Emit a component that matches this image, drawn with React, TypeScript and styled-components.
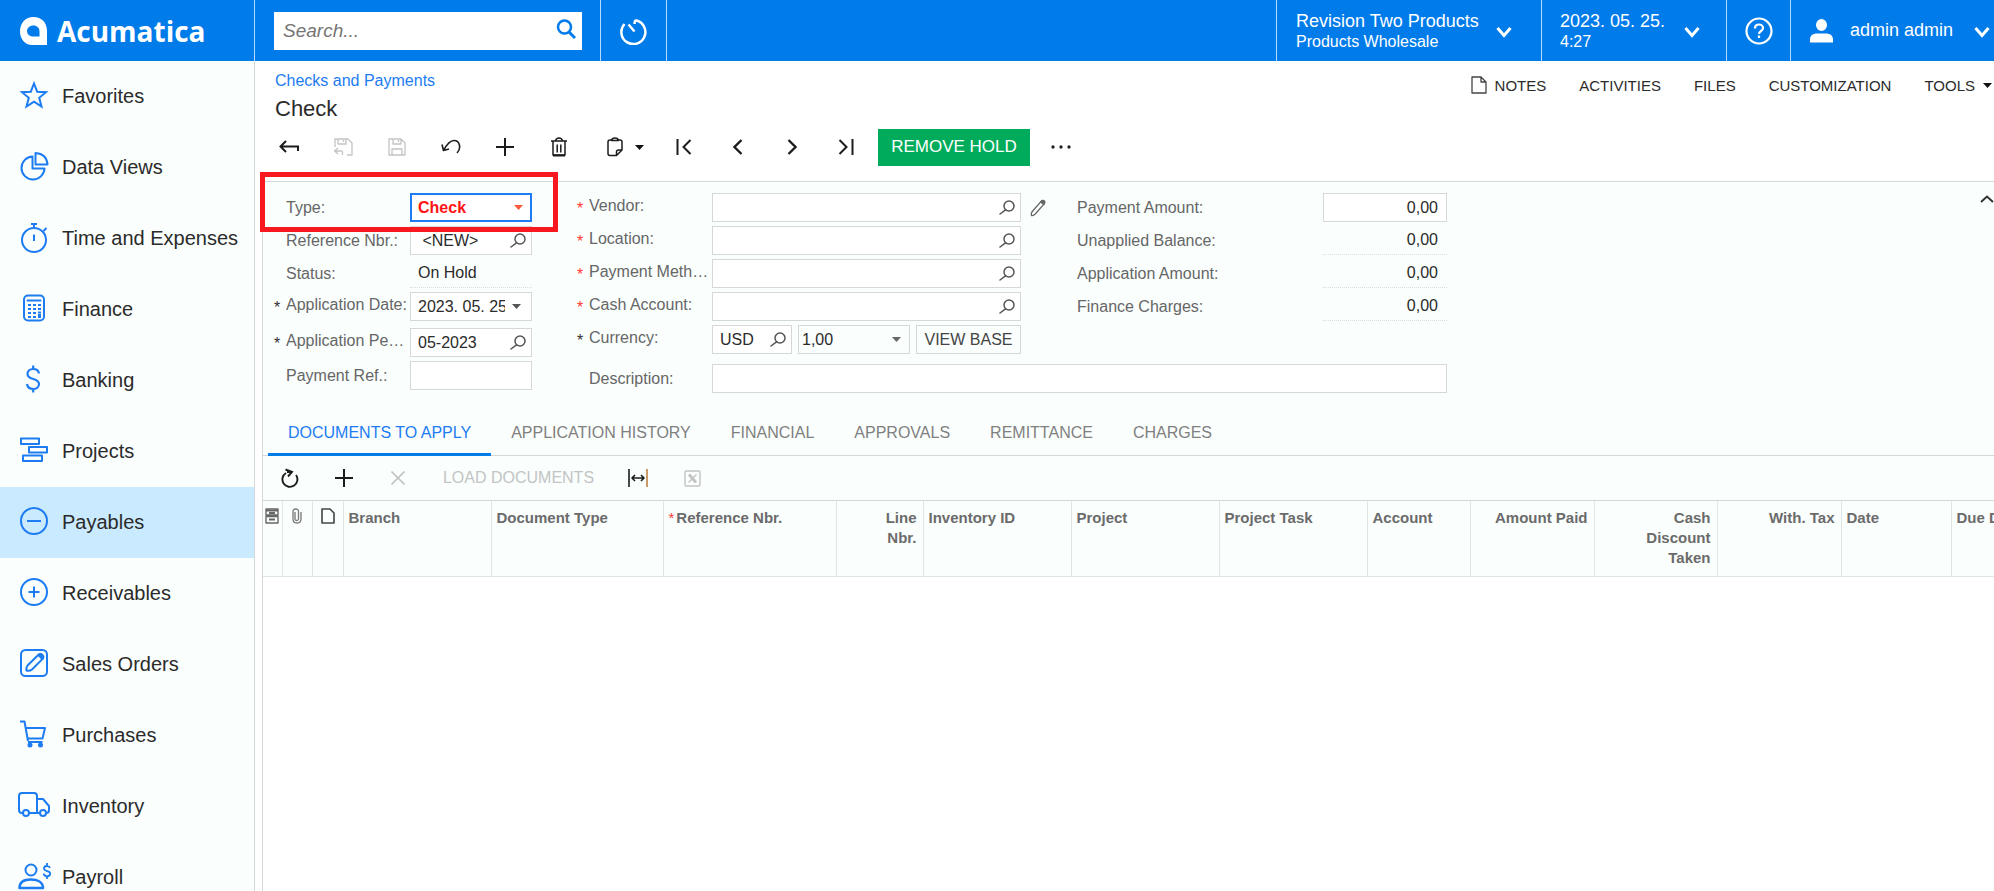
import React from "react";
import styled, { createGlobalStyle, css } from "styled-components";

const BLUE = "#007bea";
const LINK = "#1d7cf2";
const PANEL = "#fafefd";
const LINE = "#d4d8d8";
const TEXT = "#2b2b2b";
const LABEL = "#666666";

const GlobalStyle = createGlobalStyle`
  *, *::before, *::after { box-sizing: border-box; }
  body { margin: 0; background: #fff; }
  body, button, input, select {
    font-family: "Liberation Sans", Arial, sans-serif;
    font-size: 16px;
    color: ${TEXT};
  }
  button, input, select { margin: 0; padding: 0; border: 0; border-radius: 0; background: none; }
  button { cursor: pointer; }
  a { text-decoration: none; color: inherit; }
  svg { display: block; flex: none; }
`;

/* ---------- icons ---------- */

type IconProps = {
  w: number;
  h: number;
  sw?: number;
  color?: string;
  children: React.ReactNode;
};

const Icon = ({ w, h, sw = 2, color = "currentColor", children }: IconProps) => (
  <svg
    width={w}
    height={h}
    viewBox={`0 0 ${w} ${h}`}
    fill="none"
    stroke={color}
    strokeWidth={sw}
    strokeLinejoin="round"
    aria-hidden="true"
  >
    {children}
  </svg>
);

const Caret = ({ color = "#111" }: { color?: string }) => (
  <svg width="9" height="5" viewBox="0 0 9 5" aria-hidden="true">
    <path d="M0 0h9L4.5 5z" fill={color} />
  </svg>
);

const ChevronDown = () => (
  <Icon w={16} h={14} sw={3}>
    <path d="M1.500 4L8 11.500l6.500-7.500" strokeLinejoin="miter" />
  </Icon>
);

const Lens = () => (
  <Icon w={16} h={16} sw={1.5} color="#555">
    <circle cx="10" cy="6" r="5" />
    <path d="M6.500 9.800L1 14" strokeLinecap="round" />
  </Icon>
);

const Pencil = () => (
  <Icon w={16} h={18} sw={1.3} color="#666">
    <path d="M1.500 16.500q-.6-2.200.8-4L11.500 1.800q1.500-1 2.600 0t.3 2.800L5 15.300q-1.500 1.500-3.500 1.200z" />
    <path d="M10.500 3l3.300 2.500 1-2.500-2-1.700z" fill="#666" />
  </Icon>
);

const moduleIcons: Record<string, React.ReactNode> = {
  Favorites: (
    <path
      d="M14 2.500l3.200 8.200 8.800.5-6.800 5.600 2.300 8.700-7.500-4.900-7.500 4.900 2.300-8.700L2 11.200l8.800-.5z"
      strokeLinejoin="miter"
    />
  ),
  "Data Views": (
    <>
      <path d="M12.500 4.500a11.500 11.500 0 1 0 12 12H12.500z" />
      <path d="M15.500 1v11.500h12C27 5.500 22.500 1.500 15.500 1z" />
    </>
  ),
  "Time and Expenses": (
    <>
      <circle cx="14" cy="17" r="12" />
      <path d="M14 11.500V18M14 5V1M11 1h6M23.500 8l3-3" />
    </>
  ),
  Finance: (
    <>
      <rect x="4" y="1.500" width="20" height="25" rx="4" />
      <path d="M7.500 6.500h13" strokeLinecap="round" />
      <path d="M8 11h3M8 15h3M8 19h3M8 23h3M13 11h3M13 15h3M13 19h3M13 23h3M18 11h3M18 15h3M18 18.500h3M18 21h3M18 23h3" />
    </>
  ),
  Banking: (
    <path
      d="M19 8.500C18.500 5.500 16 4 13.200 4 10 4 7.500 6 7.500 9c0 6.500 11.500 3.500 11.500 10 0 3-2.500 5-5.800 5-3.200 0-5.700-1.800-6.200-5M13.200 4V.5M13.200 27.500V24"
      strokeWidth="2.200"
    />
  ),
  Projects: (
    <>
      <rect x="1" y="2.500" width="18" height="5.500" />
      <rect x="9" y="11" width="18" height="5.500" />
      <rect x="3" y="19.500" width="19" height="5.500" />
    </>
  ),
  Payables: (
    <>
      <circle cx="14" cy="14" r="13" />
      <path d="M7 14h14" />
    </>
  ),
  Receivables: (
    <>
      <circle cx="14" cy="14" r="13" />
      <path d="M8.500 14h11M14 8.500v11" />
    </>
  ),
  "Sales Orders": (
    <>
      <rect x="1" y="1" width="26" height="26" rx="4.500" />
      <path d="M6.500 21.500q-.5-3 1-5L18.500 5.800q2-1.200 3.700.4t.4 3.700L12 20.500q-2.500 2-5.500 1z" />
      <path d="M18.500 6l3.800 4q2.200-2 0-4t-3.800 0z" fill={LINK} />
    </>
  ),
  Purchases: (
    <>
      <path d="M0 1.500h4.500L8 21M5.800 8H25l-2.500 10.500H7.600M8 22h14.500" />
      <circle cx="10" cy="25" r="1.500" fill={LINK} />
      <circle cx="20.500" cy="25" r="1.500" fill={LINK} />
    </>
  ),
  Inventory: (
    <>
      <path d="M3 22H2q-3 0-3-3V5q0-3 3-3h12q3 0 3 3v17H9M17 8h6l6 7v4q0 3-2.500 3M20 22h-3" />
      <circle cx="6" cy="22" r="3" />
      <circle cx="23" cy="22" r="3" />
    </>
  ),
  Payroll: (
    <>
      <circle cx="11" cy="8" r="5.500" />
      <path d="M-.5 26c0-6 5-8.500 11.500-8.500S23 20 23 26z" strokeWidth="2.500" />
      <path
        d="M30 6c-.5-1.500-1.500-2-3-2-1.600 0-3 1-3 2.500 0 3.400 6.200 1.800 6.200 5.100 0 1.600-1.400 2.700-3.200 2.700-1.600 0-3-1-3.200-2.600M27 4V1M27 17v-2.700"
        strokeWidth="1.800"
      />
    </>
  ),
};

/* ---------- header ---------- */

const Page = styled.div`
  height: 100vh;
  display: flex;
  flex-direction: column;
  overflow: hidden;
`;

const Header = styled.header`
  display: flex;
  flex: none;
  height: 61px;
  background: ${BLUE};
  color: #fff;
`;

const Brand = styled.a`
  display: flex;
  align-items: center;
  gap: 10px;
  width: 254px;
  padding-left: 20px;
`;

const BrandName = styled.span`
  font: 700 28px/32px "Open Sans", "Noto Sans", sans-serif;
`;

const HeaderCell = styled.div<{ $w?: number; $left?: number; $right?: number; $grow?: boolean }>`
  display: flex;
  align-items: center;
  flex: ${(p) => (p.$grow ? "1 1 0" : "none")};
  width: ${(p) => (p.$w ? `${p.$w}px` : "auto")};
  padding: 0 ${(p) => p.$right ?? 0}px 0 ${(p) => p.$left ?? 0}px;
  border-left: 1px solid #b5dbff;
`;

const HeaderButton = styled.button<{ $center?: boolean }>`
  display: flex;
  align-items: center;
  justify-content: ${(p) => (p.$center ? "center" : "space-between")};
  width: 100%;
  height: 61px;
  color: #fff;
  text-align: left;
  font-size: 18px;
  white-space: nowrap;
`;

const SearchBox = styled.form`
  display: flex;
  align-items: center;
  width: 308px;
  height: 38px;
  padding: 0 7px 0 9px;
  background: #fff;
`;

const SearchInput = styled.input`
  flex: 1;
  min-width: 0;
  height: 38px;
  font-size: 19px;
  font-style: italic;
  outline: 0;
  &::placeholder { color: #757575; opacity: 1; }
`;

const TwoLines = styled.span`
  display: flex;
  flex-direction: column;
  line-height: 22px;
  small { font-size: 16px; line-height: 20px; }
`;

const UserName = styled.span`
  flex: 1;
  padding-left: 17px;
`;

/* ---------- sidebar ---------- */

const Body = styled.div`
  display: flex;
  flex: 1;
  min-height: 0;
`;

const Sidebar = styled.nav`
  flex: none;
  width: 255px;
  overflow: hidden;
  background: ${PANEL};
  border-right: 1px solid ${LINE};
`;

const Module = styled.a<{ $active?: boolean }>`
  display: flex;
  align-items: center;
  gap: 14px;
  height: 71px;
  padding-left: 20px;
  font-size: 20px;
  white-space: nowrap;
  background: ${(p) => (p.$active ? "#caeaff" : "transparent")};
  svg { overflow: visible; margin-bottom: 4px; }
`;

/* ---------- title and toolbar ---------- */

const Main = styled.main`
  flex: 1;
  min-width: 0;
  display: flex;
  flex-direction: column;
  padding-left: 7px;
`;

const TitleBar = styled.div`
  display: flex;
  justify-content: space-between;
  padding: 10px 2px 0 13px;
`;

const Crumb = styled.a`
  display: block;
  line-height: 20px;
  color: ${LINK};
`;

const Title = styled.h1`
  margin: 4px 0 0;
  font-size: 22px;
  line-height: 28px;
  font-weight: 400;
`;

const Links = styled.div`
  display: flex;
  gap: 33px;
  height: 28px;
`;

const LinkButton = styled.button`
  display: flex;
  align-items: center;
  gap: 8px;
  height: 28px;
  font-size: 15px;
`;

const Toolbar = styled.div<{ $grid?: boolean }>`
  display: flex;
  align-items: center;
  flex: none;
  ${(p) =>
    p.$grid
      ? css`
          height: 45px;
          border-bottom: 1px solid ${LINE};
        `
      : css`
          height: 58px;
          padding-bottom: 10px;
        `}
`;

const Tool = styled.button<{ $w?: number; $off?: boolean }>`
  display: flex;
  align-items: center;
  justify-content: center;
  flex: none;
  width: ${(p) => p.$w ?? 54}px;
  height: 37px;
  color: ${(p) => (p.$off ? "#c2c4c4" : "#1c1c1c")};
`;

const MenuTool = styled(Tool)`
  gap: 12px;
  padding-left: 7px;
`;

const HoldButton = styled.button`
  width: 152px;
  height: 37px;
  margin-left: 5px;
  background: #00ac5b;
  color: #fff;
  font-size: 17px;
`;

/* ---------- form ---------- */

const Panel = styled.section`
  position: relative;
  flex: 1;
  display: flex;
  flex-direction: column;
  border: solid ${LINE};
  border-width: 1px 0 0 1px;
`;

const Form = styled.div`
  display: flex;
  flex: none;
  gap: 45px;
  padding: 11px 0 12px 11px;
  background: ${PANEL};
`;

const Column = styled.div<{ $gap?: number }>`
  display: flex;
  flex-direction: column;
  gap: ${(p) => p.$gap ?? 4}px;
`;

const Columns = styled.div`
  display: flex;
`;

const Field = styled.div<{ $label: number; $control: number }>`
  display: grid;
  grid-template-columns: ${(p) => p.$label}px ${(p) => p.$control}px;
  align-items: center;
  height: 29px;
`;

const LabelCell = styled.label`
  display: flex;
  padding-right: 2px;
  color: ${LABEL};
  line-height: 20px;
`;

const Mark = styled.span<{ $red?: boolean }>`
  flex: none;
  width: 12px;
  padding-top: 3px;
  color: ${(p) => (p.$red ? "#ff3b30" : "#333")};
`;

const LabelText = styled.span`
  overflow: hidden;
  white-space: nowrap;
  text-overflow: ellipsis;
`;

const Box = styled.div<{ $focus?: boolean; $plain?: boolean }>`
  display: flex;
  align-items: center;
  height: 29px;
  min-width: 0;
  background: ${(p) => (p.$plain ? "transparent" : "#fff")};
  border: ${(p) => (p.$focus ? `2px solid ${LINK}` : `1px solid ${LINE}`)};
  padding: 0 ${(p) => (p.$focus ? 7 : 4)}px 0 ${(p) => (p.$focus ? 6 : p.$plain ? 3 : 7)}px;
`;

const Input = styled.input<{ $right?: boolean }>`
  flex: 1;
  min-width: 0;
  width: 100%;
  height: 25px;
  text-align: ${(p) => (p.$right ? "right" : "left")};
  padding-right: ${(p) => (p.$right ? 4 : 0)}px;
  outline: 0;
`;

const TypeSelect = styled.select`
  flex: 1;
  min-width: 0;
  height: 25px;
  appearance: none;
  font-weight: 700;
  color: #ff1414;
  outline: 0;
`;

const BoxButton = styled.button`
  display: flex;
  align-items: center;
  justify-content: center;
  flex: none;
  width: 18px;
  height: 25px;
`;

const DropButton = styled(BoxButton)`
  width: 22px;
`;

const ReadOnly = styled.output<{ $right?: boolean }>`
  height: 29px;
  line-height: 28px;
  padding: 0 9px 0 8px;
  text-align: ${(p) => (p.$right ? "right" : "left")};
  border-bottom: 1px dotted #dcdfdf;
`;

const CurrencyRow = styled.div`
  display: grid;
  grid-template-columns: 80px 112px 105px;
  gap: 6px;
`;

const ViewBase = styled.button`
  height: 29px;
  border: 1px solid ${LINE};
  color: #444;
`;

const EditButton = styled.button`
  display: flex;
  align-items: center;
  justify-content: center;
  width: 34px;
  height: 29px;
`;

const AmountColumn = styled(Column)`
  margin-left: 10px;
`;

const CollapseButton = styled.button`
  margin-left: auto;
  width: 14px;
  height: 12px;
  color: #333;
`;

const Highlight = styled.div`
  position: absolute;
  z-index: 1;
  left: -3px;
  top: -10px;
  width: 298px;
  height: 60px;
  border: 5px solid #f71820;
  pointer-events: none;
`;

/* ---------- tabs and grid ---------- */

const Tabs = styled.div`
  display: flex;
  flex: none;
  height: 51px;
  padding-left: 5px;
  background: ${PANEL};
  border-bottom: 1px solid ${LINE};
`;

const Tab = styled.button<{ $active?: boolean }>`
  height: 51px;
  padding: 7px 20px 0;
  color: ${(p) => (p.$active ? LINK : "#808080")};
  border-bottom: 3px solid ${(p) => (p.$active ? BLUE : "transparent")};
  white-space: nowrap;
`;

const GridArea = styled.div`
  flex: 1;
  overflow: hidden;
`;

const GridTop = styled.div`
  background: ${PANEL};
`;

const Table = styled.table`
  table-layout: fixed;
  width: 1797px;
  min-width: 100%;
  border-collapse: collapse;
  background: ${PANEL};
`;

const Th = styled.th<{ $right?: boolean; $icon?: boolean }>`
  height: 75px;
  padding: ${(p) => (p.$icon ? "7px 0 0" : "7px 6px 0 5px")};
  vertical-align: top;
  text-align: ${(p) => (p.$right ? "right" : "left")};
  font-size: 15px;
  line-height: 20px;
  font-weight: 700;
  color: #6b6b6b;
  white-space: nowrap;
  border: solid #dfe6e8;
  border-width: 0 1px 1px 0;
  svg { margin: 0 auto; }
  em { font-style: normal; font-weight: 400; color: #ff3b30; padding-right: 2px; }
`;

/* ---------- pieces ---------- */

const FieldLabel = ({ id, text, mark }: { id: string; text: string; mark?: "red" | "dark" }) => (
  <LabelCell htmlFor={id}>
    <Mark $red={mark === "red"}>{mark ? "*" : ""}</Mark>
    <LabelText>{text}</LabelText>
  </LabelCell>
);

const LookupField = ({
  id,
  text,
  mark,
  value = "",
  label = 135,
  control = 309,
}: {
  id: string;
  text: string;
  mark?: "red" | "dark";
  value?: string;
  label?: number;
  control?: number;
}) => (
  <Field $label={label} $control={control}>
    <FieldLabel id={id} text={text} mark={mark} />
    <Box>
      <Input id={id} defaultValue={value} />
      <BoxButton aria-label={`Look up ${text}`}>
        <Lens />
      </BoxButton>
    </Box>
  </Field>
);

const modules = Object.keys(moduleIcons);

const columns: { name: React.ReactNode; key: string; w: number; right?: boolean }[] = [
  { key: "branch", name: "Branch", w: 148 },
  { key: "doctype", name: "Document Type", w: 172 },
  { key: "ref", name: <><em>*</em>Reference Nbr.</>, w: 173 },
  { key: "line", name: <>Line<br />Nbr.</>, w: 87, right: true },
  { key: "inv", name: "Inventory ID", w: 148 },
  { key: "project", name: "Project", w: 148 },
  { key: "task", name: "Project Task", w: 148 },
  { key: "account", name: "Account", w: 103 },
  { key: "paid", name: "Amount Paid", w: 124, right: true },
  { key: "discount", name: <>Cash<br />Discount<br />Taken</>, w: 123, right: true },
  { key: "tax", name: "With. Tax", w: 124, right: true },
  { key: "date", name: "Date", w: 110 },
  { key: "due", name: "Due Date", w: 110 },
];

export default function App() {
  return (
    <Page>
      <GlobalStyle />
      <Header>
        <Brand href="#">
          <svg width="27" height="28" viewBox="0 0 27 28" aria-hidden="true">
            <path
              fill="#fff"
              fillRule="evenodd"
              d="M13.500 0C21.500 0 27 5.500 27 14v14H12.500C4.500 28 0 21.500 0 14.500 0 6 5.500 0 13.500 0zM13.500 8.500C9.500 8.500 7 11 7 14s2.500 5.500 6 5.500h6.500V14.500C19.500 11 17 8.500 13.500 8.500z"
            />
          </svg>
          <BrandName>Acumatica</BrandName>
        </Brand>
        <HeaderCell $w={346} $left={19}>
          <SearchBox onSubmit={(e) => e.preventDefault()}>
            <SearchInput type="search" aria-label="Search" placeholder="Search..." />
            <BoxButton aria-label="Search">
              <Icon w={20} h={24} sw={2.5} color={BLUE}>
                <circle cx="8.500" cy="8" r="6.500" />
                <path d="M12.500 12.500l6.500 6.500" strokeWidth="3" />
              </Icon>
            </BoxButton>
          </SearchBox>
        </HeaderCell>
        <HeaderCell $w={66}>
          <HeaderButton $center aria-label="Recent">
            <Icon w={28} h={28} sw={2.5}>
              <path d="M4.500 7A12 12 0 1 0 16.500 3.500Q14.500 3 14.500 7" />
              <path d="M8.500 7.500l6 7" />
            </Icon>
          </HeaderButton>
        </HeaderCell>
        <HeaderCell $grow />
        <HeaderCell $w={265} $left={19} $right={29}>
          <HeaderButton>
            <TwoLines>
              Revision Two Products
              <small>Products Wholesale</small>
            </TwoLines>
            <ChevronDown />
          </HeaderButton>
        </HeaderCell>
        <HeaderCell $w={185} $left={18} $right={26}>
          <HeaderButton>
            <TwoLines>
              2023. 05. 25.
              <small>4:27</small>
            </TwoLines>
            <ChevronDown />
          </HeaderButton>
        </HeaderCell>
        <HeaderCell $w={64}>
          <HeaderButton $center aria-label="Help">
            <Icon w={28} h={28} sw={2.2}>
              <circle cx="14" cy="14" r="12.500" />
              <path d="M10 11.500c0-2.500 1.700-4 4-4s4 1.500 4 3.500c0 3-4 3-4 6" />
              <path d="M14 18.500V21" />
            </Icon>
          </HeaderButton>
        </HeaderCell>
        <HeaderCell $w={204} $right={4}>
          <HeaderButton>
            <svg width="42" height="24" viewBox="-19 0 42 24" aria-hidden="true">
              <path
                fill="#fff"
                d="M11.500 0a5.500 6 0 0 1 0 12 5.500 6 0 0 1 0-12zM0 23.500v-3c0-4 3-6 7-6h9c4 0 7 2 7 6v3z"
              />
            </svg>
            <UserName>admin admin</UserName>
            <ChevronDown />
          </HeaderButton>
        </HeaderCell>
      </Header>

      <Body>
        <Sidebar>
          {modules.map((name) => (
            <Module key={name} href="#" $active={name === "Payables"}>
              <Icon w={28} h={28} color={LINK}>
                {moduleIcons[name]}
              </Icon>
              <span>{name}</span>
            </Module>
          ))}
        </Sidebar>

        <Main>
          <TitleBar>
            <div>
              <Crumb href="#">Checks and Payments</Crumb>
              <Title>Check</Title>
            </div>
            <Links>
              <LinkButton>
                <Icon w={16} h={18} sw={1.3} color="#444">
                  <path d="M1 1h9l5 5v11H1zM10 1v5h5" />
                </Icon>
                NOTES
              </LinkButton>
              <LinkButton>ACTIVITIES</LinkButton>
              <LinkButton>FILES</LinkButton>
              <LinkButton>CUSTOMIZATION</LinkButton>
              <LinkButton>
                <span>TOOLS</span>
                <Caret />
              </LinkButton>
            </Links>
          </TitleBar>

          <Toolbar>
            <Tool aria-label="Back">
              <Icon w={20} h={14}>
                <path d="M7 1L1.500 6.500 7 12M1.500 6.500H19V11" strokeLinejoin="miter" />
              </Icon>
            </Tool>
            <Tool $off aria-label="Save and close">
              <Icon w={20} h={18} sw={1.3}>
                <path d="M2 9V1h13l4 4v12h-5M5 1v5h8V1M10.500 2v2M5 10l-3.500 3L5 16M1.500 13H8q1.500 0 1.500 1.500V17" />
              </Icon>
            </Tool>
            <Tool $off aria-label="Save">
              <Icon w={18} h={18} sw={1.3}>
                <path d="M1 1h12l4 4v12H1zM5 1v5h8V1M10.500 2v2M4 17v-6h10v6" />
              </Icon>
            </Tool>
            <Tool aria-label="Undo">
              <Icon w={20} h={16} sw={1.6}>
                <path d="M1 5.500l1.500 6L8 10M2.500 11.500C6 5 9 1.500 13 1.500c6 0 7.500 8 3 12.500" />
              </Icon>
            </Tool>
            <Tool aria-label="Add">
              <Icon w={18} h={18}>
                <path d="M0 9h18M9 0v18" />
              </Icon>
            </Tool>
            <Tool aria-label="Delete">
              <Icon w={16} h={20} sw={1.5}>
                <path d="M0 4h16M4.500 4Q5 1 8 1t3.500 3M2 4v14h12V4M6.200 7.500v8M9.800 7.500v8" />
                <path d="M2 18.500h12" strokeWidth="2" />
              </Icon>
            </Tool>
            <MenuTool $w={71} aria-label="Clipboard">
              <Icon w={16} h={20} sw={1.5}>
                <path d="M4.500 3H3Q1 3 1 5v11.500q0 2 2 2h6.500L15 13V5q0-2-2-2h-1.500M4.500 3.500Q5 1 8 1t3.500 2.500zM9.500 18.500V15q0-2 2-2H15" />
              </Icon>
              <Caret />
            </MenuTool>
            <Tool aria-label="First">
              <Icon w={16} h={16}>
                <path d="M1.500 0v16M14.500 1L7.500 8l7 7" strokeLinejoin="miter" />
              </Icon>
            </Tool>
            <Tool aria-label="Previous">
              <Icon w={10} h={16} sw={2.3}>
                <path d="M8.500 1L1.500 8l7 7" strokeLinejoin="miter" />
              </Icon>
            </Tool>
            <Tool aria-label="Next">
              <Icon w={10} h={16} sw={2.3}>
                <path d="M1.500 1l7 7-7 7" strokeLinejoin="miter" />
              </Icon>
            </Tool>
            <Tool aria-label="Last">
              <Icon w={16} h={16}>
                <path d="M14.500 0v16M1.500 1l7 7-7 7" strokeLinejoin="miter" />
              </Icon>
            </Tool>
            <HoldButton>REMOVE HOLD</HoldButton>
            <Tool $w={62} aria-label="More">
              <svg width="20" height="4" viewBox="0 0 20 4" fill="#222" aria-hidden="true">
                <circle cx="2" cy="2" r="1.700" />
                <circle cx="10" cy="2" r="1.700" />
                <circle cx="18" cy="2" r="1.700" />
              </svg>
            </Tool>
          </Toolbar>

          <Panel>
            <Highlight />
            <Form>
              <Column $gap={7}>
                <Column>
                  <Field $label={136} $control={122}>
                    <FieldLabel id="type" text="Type:" />
                    <Box $focus>
                      <TypeSelect id="type" defaultValue="Check">
                        <option>Check</option>
                      </TypeSelect>
                      <Caret color="#ff5a3c" />
                    </Box>
                  </Field>
                  <LookupField id="ref" text="Reference Nbr.:" value=" <NEW>" label={136} control={122} />
                  <Field $label={136} $control={122}>
                    <FieldLabel id="status" text="Status:" />
                    <ReadOnly id="status">On Hold</ReadOnly>
                  </Field>
                  <Field $label={136} $control={122}>
                    <FieldLabel id="date" text="Application Date:" mark="dark" />
                    <Box>
                      <Input id="date" defaultValue="2023. 05. 25." />
                      <DropButton aria-label="Choose date">
                        <Caret color="#555" />
                      </DropButton>
                    </Box>
                  </Field>
                </Column>
                <Column>
                  <LookupField
                    id="period"
                    text="Application Period:"
                    mark="dark"
                    value="05-2023"
                    label={136}
                    control={122}
                  />
                  <Field $label={136} $control={122}>
                    <FieldLabel id="payref" text="Payment Ref.:" />
                    <Box>
                      <Input id="payref" />
                    </Box>
                  </Field>
                </Column>
              </Column>

              <Column $gap={10}>
                <Columns>
                  <Column>
                    <LookupField id="vendor" text="Vendor:" mark="red" />
                    <LookupField id="location" text="Location:" mark="red" />
                    <LookupField id="method" text="Payment Method:" mark="red" />
                    <LookupField id="cash" text="Cash Account:" mark="red" />
                    <Field $label={135} $control={309}>
                      <FieldLabel id="currency" text="Currency:" mark="dark" />
                      <CurrencyRow>
                        <Box>
                          <Input id="currency" defaultValue="USD" />
                          <BoxButton aria-label="Look up currency">
                            <Lens />
                          </BoxButton>
                        </Box>
                        <Box $plain>
                          <Input aria-label="Currency rate" defaultValue="1,00" />
                          <BoxButton aria-label="Rate options">
                            <Caret color="#666" />
                          </BoxButton>
                        </Box>
                        <ViewBase>VIEW BASE</ViewBase>
                      </CurrencyRow>
                    </Field>
                  </Column>
                  <EditButton aria-label="Edit vendor">
                    <Pencil />
                  </EditButton>
                  <AmountColumn>
                    <Field $label={258} $control={124}>
                      <FieldLabel id="amount" text="Payment Amount:" />
                      <Box>
                        <Input id="amount" $right defaultValue="0,00" />
                      </Box>
                    </Field>
                    <Field $label={258} $control={124}>
                      <FieldLabel id="balance" text="Unapplied Balance:" />
                      <ReadOnly id="balance" $right>0,00</ReadOnly>
                    </Field>
                    <Field $label={258} $control={124}>
                      <FieldLabel id="applied" text="Application Amount:" />
                      <ReadOnly id="applied" $right>0,00</ReadOnly>
                    </Field>
                    <Field $label={258} $control={124}>
                      <FieldLabel id="charges" text="Finance Charges:" />
                      <ReadOnly id="charges" $right>0,00</ReadOnly>
                    </Field>
                  </AmountColumn>
                </Columns>
                <Field $label={135} $control={735}>
                  <FieldLabel id="description" text="Description:" />
                  <Box>
                    <Input id="description" />
                  </Box>
                </Field>
              </Column>
              <CollapseButton aria-label="Collapse form">
                <Icon w={14} h={8} sw={2}>
                  <path d="M1 7l6-5.500L13 7" strokeLinejoin="miter" />
                </Icon>
              </CollapseButton>
            </Form>

            <Tabs>
              <Tab $active>DOCUMENTS TO APPLY</Tab>
              <Tab>APPLICATION HISTORY</Tab>
              <Tab>FINANCIAL</Tab>
              <Tab>APPROVALS</Tab>
              <Tab>REMITTANCE</Tab>
              <Tab>CHARGES</Tab>
            </Tabs>

            <GridArea>
              <GridTop>
                <Toolbar $grid>
                  <Tool aria-label="Refresh">
                    <Icon w={18} h={20} sw={1.9}>
                      <path d="M5 5A7.500 7.500 0 1 0 15 7" />
                      <path d="M4.500 1.500L11 4 7 8.500M11 4H6" strokeLinejoin="miter" />
                    </Icon>
                  </Tool>
                  <Tool aria-label="Add row">
                    <Icon w={18} h={18}>
                      <path d="M0 9h18M9 0v18" />
                    </Icon>
                  </Tool>
                  <Tool $off aria-label="Delete row">
                    <Icon w={14} h={14} sw={1.6}>
                      <path d="M.5.5l13 13M13.500.5l-13 13" />
                    </Icon>
                  </Tool>
                  <Tool $off $w={187}>LOAD DOCUMENTS</Tool>
                  <Tool $w={52} aria-label="Fit columns">
                    <Icon w={20} h={18} sw={1.6}>
                      <path d="M1 0v18M4 9h12M7 6L4 9l3 3M13 6l3 3-3 3" />
                      <path d="M19 0v18" stroke="#c08040" />
                    </Icon>
                  </Tool>
                  <Tool $off $w={56} aria-label="Export to Excel">
                    <Icon w={17} h={17} sw={1.4}>
                      <rect x="1" y="1" width="15" height="15" rx="1" />
                      <path d="M5 4.500l7 8" strokeWidth="3" />
                      <path d="M12.500 4.500l-8 8" />
                    </Icon>
                  </Tool>
                </Toolbar>
              </GridTop>
              <Table>
                <colgroup>
                  <col width="19" />
                  <col width="30" />
                  <col width="31" />
                  {columns.map((c) => (
                    <col key={c.key} width={c.w} />
                  ))}
                </colgroup>
                <thead>
                  <tr>
                    <Th $icon aria-label="Row settings">
                      <Icon w={14} h={16} sw={1.4} color="#666">
                        <path d="M1 1h12v6H1zM1 8.500h12V15H1z" />
                        <path d="M1 2.500h12M4 5h6M4 11.500h6" strokeWidth="2.200" />
                      </Icon>
                    </Th>
                    <Th $icon aria-label="Files">
                      <Icon w={12} h={16} sw={1.3} color="#777">
                        <path d="M4 4v7q0 1.500 1.700 1.500T7.500 11V3.500Q7.500 1 4.700 1T2 3.500V11q0 4 4 4t4-4V4" />
                      </Icon>
                    </Th>
                    <Th $icon aria-label="Notes">
                      <Icon w={14} h={16} sw={1.6} color="#444">
                        <path d="M1 1h8l4 4v10H1z" />
                      </Icon>
                    </Th>
                    {columns.map((c) => (
                      <Th key={c.key} $right={c.right} scope="col">
                        {c.name}
                      </Th>
                    ))}
                  </tr>
                </thead>
              </Table>
            </GridArea>
          </Panel>
        </Main>
      </Body>
    </Page>
  );
}
